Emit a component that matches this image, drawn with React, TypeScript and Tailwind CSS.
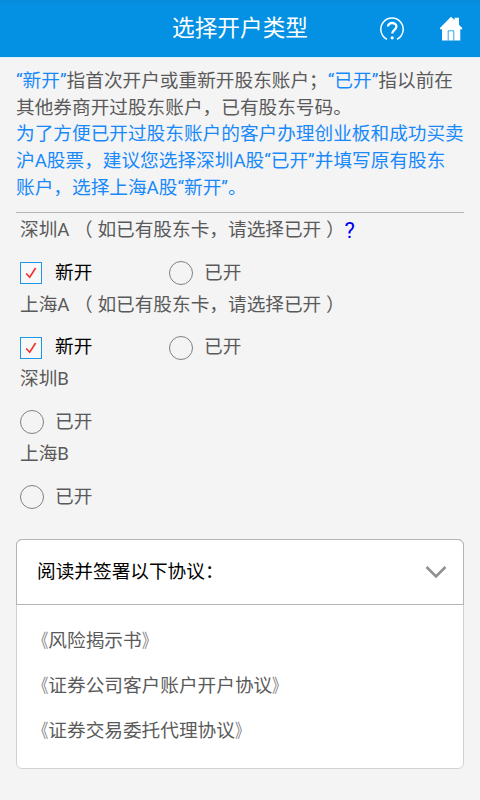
import React from "react";

function HelpIcon() {
  return (
    <svg width="26" height="26" viewBox="0 0 26 26" fill="none" stroke="#fff">
      <path d="M8 23.3A11.2 11.2 0 1 1 18 23.3" strokeWidth="1.5" />
      <path d="M9 10.6C9 5.8 17.4 5.8 17.4 10.6C17.4 13.8 13.2 13.8 13.2 17.6" strokeWidth="2.3" />
      <circle cx="13.2" cy="21.8" r="1.6" fill="#fff" stroke="none" />
    </svg>
  );
}

function HomeIcon() {
  return (
    <svg width="24" height="26" viewBox="0 0 24 26">
      <path
        d="M12 0.7L15.5 4V1.7H20V8.7L23.2 12V13.2H21.3V24.5H3V13.2H1V12Z"
        fill="#fff"
      />
      <path d="M9.2 24.5V14.8H14.8V24.5" fill="none" stroke="#0591e3" strokeWidth="0.8" />
    </svg>
  );
}

function Choice({ label, checked = false }: { label: string; checked?: boolean }) {
  return (
    <div className="flex w-[149px] items-center">
      {checked ? (
        <span className="flex h-[22px] w-[22px] items-center justify-center border-[1.5px] border-[#1b98e5] bg-[#f8f8f8]">
          <svg width="12" height="14" viewBox="0 0 12 14" fill="none" stroke="#ee3128" strokeWidth="1.6">
            <path d="M1.2 7.5L4.7 11.2L10.6 2" />
          </svg>
        </span>
      ) : (
        <span className="h-6 w-6 rounded-full border border-[#808080]" />
      )}
      <span className={checked ? "ml-[13px] text-black" : "ml-[11px]"}>{label}</span>
    </div>
  );
}

function Account({ name, hint, help, both }: { name: string; hint?: boolean; help?: boolean; both?: boolean }) {
  return (
    <section className="h-[74.67px] pl-1">
      <div className="flex h-[31px] items-center whitespace-pre">
        <span>{name}{hint && " （ 如已有股东卡，请选择已开 ）"}</span>
        {help && <a className="text-[22px] leading-none text-[#0000ee]">?</a>}
      </div>
      <div className="flex h-6 items-center mt-[15px]">
        {both && <Choice label="新开" checked />}
        <Choice label="已开" />
      </div>
    </section>
  );
}

function Agreement({ title }: { title: string }) {
  return (
    <li className="flex h-[45.33px] items-center">
      <span className="inline-block w-[9.33px] origin-right scale-x-[0.78] text-[#808080] [font-feature-settings:'halt']">《</span>
      {title}
      <span className="inline-block w-[9.33px] origin-left scale-x-[0.78] text-[#808080] [font-feature-settings:'halt']">》</span>
    </li>
  );
}

export default function App() {
  return (
    <div
      lang="zh-CN"
      className="h-[800px] w-[480px] overflow-hidden bg-[#f4f4f4] font-[Roboto,'Noto_Sans_CJK_SC',sans-serif] text-[18.67px] leading-[26.67px] text-[#5a5a5a]"
    >
      <header className="grid h-[58px] grid-cols-[1fr_auto_1fr] items-center border-b border-[#dceffa] bg-[#0591e3] bg-linear-to-b from-[#078ada] from-0% to-[#0591e3] to-10% text-white">
        <span />
        <h1 className="text-[22.67px] leading-8">选择开户类型</h1>
        <div className="flex items-center justify-between pl-[71px] pr-[17px]">
          <HelpIcon />
          <HomeIcon />
        </div>
      </header>
      <main className="px-4">
        <div className="h-[155px] border-b-[1.5px] border-[#b4b4b4] pt-[10px]">
          <p className="whitespace-nowrap">
            <span className="text-[#1989fa]">“新开”</span>指首次开户或重新开股东账户；<span className="text-[#1989fa]">“已开”</span>指以前在<br />
            其他券商开过股东账户，已有股东号码。
          </p>
          <p className="whitespace-nowrap text-[#1989fa]">
            为了方便已开过股东账户的客户办理创业板和成功买卖<br />
            沪A股票，建议您选择深圳A股“已开”并填写原有股东<br />
            账户，选择上海A股“新开”。
          </p>
        </div>
        <div className="h-[326px] pt-[2px]">
          <Account name="深圳A" hint help both />
          <Account name="上海A" hint both />
          <Account name="深圳B" />
          <Account name="上海B" />
        </div>
        <section className="h-[230px] rounded-[6px] bg-white border border-[#d2d2d2]">
          <div className="-mx-px -mt-px flex h-[66px] items-center justify-between rounded-t-[6px] border-[1.5px] border-[#b4b4b4] pl-[20px] pr-4 text-black">
            <span>阅读并签署以下协议：</span>
            <svg width="22" height="14" viewBox="0 0 22 14" fill="none" stroke="#909090" strokeWidth="2.6">
              <path d="M1.5 2L11 11.5L20.5 2" />
            </svg>
          </div>
          <ul className="pl-[22px] pt-[13.3px]">
            <Agreement title="风险揭示书" />
            <Agreement title="证券公司客户账户开户协议" />
            <Agreement title="证券交易委托代理协议" />
          </ul>
        </section>
      </main>
    </div>
  );
}
